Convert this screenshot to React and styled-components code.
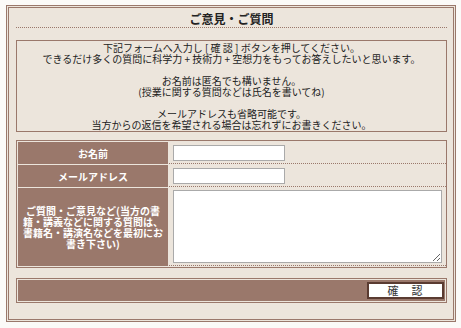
import React from "react";
import styled, { createGlobalStyle } from "styled-components";

const BROWN = "#9a786b";
const BEIGE = "#ece5dc";

const GlobalStyle = createGlobalStyle`
  body {
    margin: 0;
    background: #fbfaf8;
    font-family: "Noto Sans CJK JP", "Noto Sans", sans-serif;
    color: #2a2a2a;
  }
`;

const Frame = styled.div`
  box-sizing: border-box;
  width: 450px;
  margin: 5px 0 0 6px;
  padding: 0 6px 16px 7px;
  border: 3px double ${BROWN};
  background: ${BEIGE};
`;

const Title = styled.h1`
  margin: 0;
  padding: 4px 0 1px;
  height: 14px;
  line-height: 14px;
  font-size: 12px;
  font-weight: bold;
  text-align: center;
  color: #222;
  border-bottom: 1px dotted ${BROWN};
`;

const Notice = styled.div`
  margin-top: 12px;
  padding: 1px 0;
  border: 1px solid ${BROWN};
  font-size: 10px;
  line-height: 11px;
  text-align: center;
  color: #222;

  p {
    margin: 0 0 11px;
  }
  p:last-child {
    margin: 0;
  }
`;

const FormTable = styled.div`
  display: grid;
  grid-template-columns: 150px 1fr;
  gap: 1px;
  margin-top: 8px;
  padding: 1px;
  border: 1px solid ${BROWN};
`;

const Label = styled.div`
  display: flex;
  align-items: center;
  justify-content: center;
  padding: 0 3px;
  background: ${BROWN};
  color: #fff;
  font-size: 10px;
  font-weight: bold;
  line-height: 11px;
  text-align: center;
`;

const Field = styled.div`
  padding: ${(p) => (p.$tall ? "2px 4px 2px" : "3px 4px 2px")};
  border-bottom: 1px dotted ${BROWN};
  line-height: 0;
`;

const TextInput = styled.input`
  box-sizing: border-box;
  width: 112px;
  height: 16px;
  margin: 0;
  padding: 0 2px;
  border: 1px solid #aaa;
  background: #fff;
`;

const TextArea = styled.textarea`
  box-sizing: border-box;
  display: block;
  width: 269px;
  height: 73px;
  margin: 0;
  border: 1px solid #aaa;
  background: #fff;
`;

const ButtonBar = styled.div`
  margin-top: 10px;
  padding: 1px;
  border: 1px solid ${BROWN};
`;

const ButtonCell = styled.div`
  display: flex;
  justify-content: flex-end;
  padding: 2px 1px;
  background: ${BROWN};
`;

const Submit = styled.button`
  box-sizing: border-box;
  width: 77px;
  height: 17px;
  padding: 0;
  border: 2px solid #5a3b31;
  background: #fff;
  font-family: "Noto Sans CJK JP", sans-serif;
  font-size: 11px;
  line-height: 13px;
  letter-spacing: 1px;
  color: #333;
`;

const fields = [
  { label: "お名前", type: "input" },
  { label: "メールアドレス", type: "input" },
  {
    label: "ご質問・ご意見など(当方の書籍・講義などに関する質問は、書籍名・講演名などを最初にお書き下さい)",
    type: "textarea",
  },
];

export default function App() {
  return (
    <>
      <GlobalStyle />
      <Frame>
        <Title>ご意見・ご質問</Title>
        <Notice>
          <p>
            下記フォームへ入力し [ 確 認 ] ボタンを押してください。
            <br />
            できるだけ多くの質問に科学力 + 技術力 + 空想力をもってお答えしたいと思います。
          </p>
          <p>
            お名前は匿名でも構いません。
            <br />
            (授業に関する質問などは氏名を書いてね)
          </p>
          <p>
            メールアドレスも省略可能です。
            <br />
            当方からの返信を希望される場合は忘れずにお書きください。
          </p>
        </Notice>
        <FormTable>
          {fields.map((f) => (
            <React.Fragment key={f.label}>
              <Label>{f.label}</Label>
              <Field $tall={f.type === "textarea"}>
                {f.type === "textarea" ? <TextArea /> : <TextInput type="text" />}
              </Field>
            </React.Fragment>
          ))}
        </FormTable>
        <ButtonBar>
          <ButtonCell>
            <Submit type="button">確　認</Submit>
          </ButtonCell>
        </ButtonBar>
      </Frame>
    </>
  );
}
